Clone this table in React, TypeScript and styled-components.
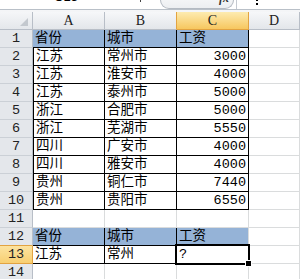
import React from "react";
import styled, { createGlobalStyle, css } from "styled-components";

const Global = createGlobalStyle`
  html, body { margin: 0; padding: 0; background: #fff; }
  body { width: 300px; height: 279px; overflow: hidden; }
`;

const GRID = "#dadcdd";
const HEAD_BORDER = "#b8bec7";
const SEL_BORDER = "#e2a341";
const BLUE = "#95b3d7";
const FONT = `"Liberation Mono", "Noto Sans CJK SC", monospace`;

const Page = styled.div`
  width: 300px;
  height: 279px;
  overflow: hidden;
  display: flex;
  flex-direction: column;
  background: #fff;
`;

const FormulaBar = styled.div`
  height: 9px;
  flex: none;
  display: flex;
  align-items: flex-end;
  overflow: hidden;
  background: #fff;
  border-bottom: 1px solid #b9c0c8;
  font-family: "Liberation Sans", Arial, sans-serif;
`;

const NameBox = styled.div`
  flex: none;
  width: 140px;
  height: 22px;
  display: flex;
  align-items: flex-end;
  justify-content: center;
  padding-bottom: 5px;
  box-sizing: border-box;
  font-size: 13px;
  line-height: 14px;
  color: #000;
  padding-right: 8px;
`;

const DropMark = styled.div`
  flex: none;
  width: 1px;
  height: 2px;
  margin-bottom: 7px;
  background: #444;
`;

const FxButton = styled.div`
  flex: none;
  margin-left: 19px;
  width: 74px;
  height: 22px;
  box-sizing: border-box;
  border: 1px solid #b4bac2;
  border-top: none;
  border-radius: 0 0 9px 9px;
  background: linear-gradient(#ffffff, #eceef1);
  display: flex;
  align-items: flex-end;
  justify-content: flex-end;
  padding: 0 4px 4px 0;
  font-family: "Liberation Serif", serif;
  font-style: italic;
  font-weight: bold;
  font-size: 12px;
  line-height: 12px;
  color: #333;
`;

const Separator = styled.div`
  flex: none;
  width: 1px;
  height: 22px;
  margin-left: 2px;
  background: #c5cad1;
`;

const Cursor = styled.div`
  flex: none;
  margin-left: 19px;
  display: flex;
  flex-direction: column;
  gap: 2px;
  padding-bottom: 4px;
`;

const Dot = styled.span`
  display: block;
  width: 2px;
  height: 2px;
  background: #000;
`;

const Gap = styled.div`
  height: 2px;
  flex: none;
  background: #f4f5f7;
`;

const Sheet = styled.div`
  display: grid;
  grid-template-columns: 33px 72px 72px 72px 1fr;
  grid-auto-rows: 18px;
  font-family: ${FONT};
  font-size: 13.5px;
`;

const Corner = styled.div`
  position: relative;
  box-sizing: border-box;
  background: linear-gradient(#f5f6f8, #e4e7eb);
  border-right: 1px solid ${HEAD_BORDER};
  border-bottom: 1px solid ${HEAD_BORDER};
  display: flex;
  align-items: flex-end;
  justify-content: flex-end;
  padding: 0 4px 3px 0;
`;

const ColHead = styled.div<{ $sel?: boolean; $nextSel?: boolean }>`
  box-sizing: border-box;
  background: linear-gradient(#f6f7f9, #e3e6ea);
  border-right: 1px solid ${(p) => (p.$nextSel || p.$sel ? SEL_BORDER : HEAD_BORDER)};
  border-bottom: 1px solid ${HEAD_BORDER};
  display: flex;
  align-items: center;
  justify-content: center;
  font-family: "Liberation Serif", "Noto Sans CJK SC", serif;
  font-size: 14px;
  line-height: 17px;
  color: #222;
  ${(p) =>
    p.$sel &&
    css`
      background: linear-gradient(#fdebb0, #f7c75f);
      border-bottom-color: ${SEL_BORDER};
    `}
`;

const RowHead = styled.div<{ $sel?: boolean; $nextSel?: boolean }>`
  box-sizing: border-box;
  background: #e4e7eb;
  border-right: 1px solid ${(p) => (p.$sel ? SEL_BORDER : HEAD_BORDER)};
  border-bottom: 1px solid ${(p) => (p.$sel || p.$nextSel ? SEL_BORDER : "#cbd0d6")};
  display: flex;
  align-items: center;
  justify-content: center;
  line-height: 17px;
  color: #222;
  ${(p) =>
    p.$sel &&
    css`
      background: linear-gradient(#fce3a0, #f8cf72);
    `}
`;

const Cell = styled.div<{
  $fill?: string;
  $right?: boolean;
  $rb?: boolean;
  $bb?: boolean;
  $lb?: boolean;
}>`
  position: relative;
  box-sizing: border-box;
  background: ${(p) => p.$fill || "#fff"};
  border-right: 1px solid ${(p) => (p.$rb ? "#000" : GRID)};
  border-bottom: 1px solid ${(p) => (p.$bb ? "#000" : GRID)};
  box-shadow: ${(p) => (p.$lb ? "inset 1px 0 0 #000" : "none")};
  display: flex;
  align-items: center;
  justify-content: ${(p) => (p.$right ? "flex-end" : "flex-start")};
  padding: 0 2px 0 ${(p) => (p.$lb ? "3px" : "2px")};
  line-height: 17px;
  color: #000;
  white-space: nowrap;
  overflow: visible;
`;

const Selection = styled.div`
  position: absolute;
  top: -2px;
  left: -2px;
  right: -2px;
  bottom: -2px;
  border: 2px solid #000;
  box-shadow: inset 0 0 0 1px #fff;
  pointer-events: none;
  z-index: 2;
`;

const FillHandle = styled.div`
  position: absolute;
  right: -4px;
  bottom: -4px;
  width: 5px;
  height: 5px;
  background: #000;
  border: 1px solid #fff;
  z-index: 3;
`;

type Row = [string, string, string];

const rows: (Row | null)[] = [
  ["省份", "城市", "工资"],
  ["江苏", "常州市", "3000"],
  ["江苏", "淮安市", "4000"],
  ["江苏", "泰州市", "5000"],
  ["浙江", "合肥市", "5000"],
  ["浙江", "芜湖市", "5550"],
  ["四川", "广安市", "4000"],
  ["四川", "雅安市", "4000"],
  ["贵州", "铜仁市", "7440"],
  ["贵州", "贵阳市", "6550"],
  null,
  ["省份", "城市", "工资"],
  ["江苏", "常州", "?"],
  null,
];

const SEL_ROW = 13;

export default function App() {
  return (
    <Page>
      <Global />
      <FormulaBar>
        <NameBox>C13</NameBox>
        <DropMark />
        <FxButton>fx</FxButton>
        <Separator />
        <Cursor>
          <Dot />
          <Dot />
        </Cursor>
      </FormulaBar>
      <Gap />
      <Sheet>
        <Corner>
          <svg width="8" height="8" viewBox="0 0 8 8">
            <polygon points="8,0 8,8 0,8" fill="#c3c8ce" />
          </svg>
        </Corner>
        <ColHead>A</ColHead>
        <ColHead $nextSel>B</ColHead>
        <ColHead $sel>C</ColHead>
        <ColHead>D</ColHead>
        {rows.map((r, i) => {
          const n = i + 1;
          const mainTable = n >= 1 && n <= 10;
          const isHeader = n === 1 || n === 12;
          const second = n === 12 || n === 13;
          const fill = isHeader ? BLUE : undefined;
          return (
            <React.Fragment key={n}>
              <RowHead $sel={n === SEL_ROW} $nextSel={n === SEL_ROW - 1}>
                {n}
              </RowHead>
              {[0, 1, 2].map((c) => {
                const text = r ? r[c] : "";
                const numeric = c === 2 && !isHeader && text !== "" && text !== "?";
                const selected = n === SEL_ROW && c === 2;
                return (
                  <Cell
                    key={c}
                    $fill={fill}
                    $right={numeric}
                    $rb={mainTable || (second && c < 2)}
                    $bb={mainTable || second}
                    $lb={mainTable && c === 0 && n > 1}
                  >
                    {text}
                    {selected && (
                      <>
                        <Selection />
                        <FillHandle />
                      </>
                    )}
                  </Cell>
                );
              })}
              <Cell />
            </React.Fragment>
          );
        })}
      </Sheet>
    </Page>
  );
}
